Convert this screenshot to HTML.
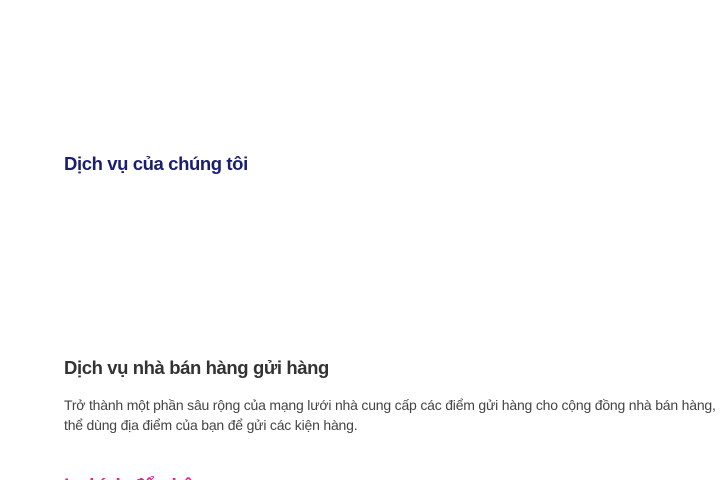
<!DOCTYPE html>
<html><head><meta charset="utf-8"><style>
html,body{margin:0;padding:0;background:#fff;width:720px;height:480px;overflow:hidden;font-family:"Liberation Sans",sans-serif}
.a{position:absolute;white-space:nowrap}
</style></head><body>
<div class="a" style="left:64px;top:153px;font-size:18.5px;font-weight:bold;color:#1b1e6e;letter-spacing:-0.4px">Dịch vụ của chúng tôi</div>
<div class="a" style="left:64px;top:357px;font-size:18.5px;font-weight:bold;color:#333;letter-spacing:-0.4px">Dịch vụ nhà bán hàng gửi hàng</div>
<div class="a" style="left:64px;top:395px;font-size:14px;line-height:20px;color:#444;letter-spacing:-0.2px">Trở thành một phần sâu rộng của mạng lưới nhà cung cấp các điểm gửi hàng cho cộng đồng nhà bán hàng, họ có<br>thể dùng địa điểm của bạn để gửi các kiện hàng.</div>
<div class="a" style="left:64px;top:474px;height:6px;overflow:hidden;width:300px"><div style="margin-top:2px;font-size:19px;line-height:22px;font-weight:bold;color:#e8258f">Lợi ích để nhận</div></div>
</body></html>
